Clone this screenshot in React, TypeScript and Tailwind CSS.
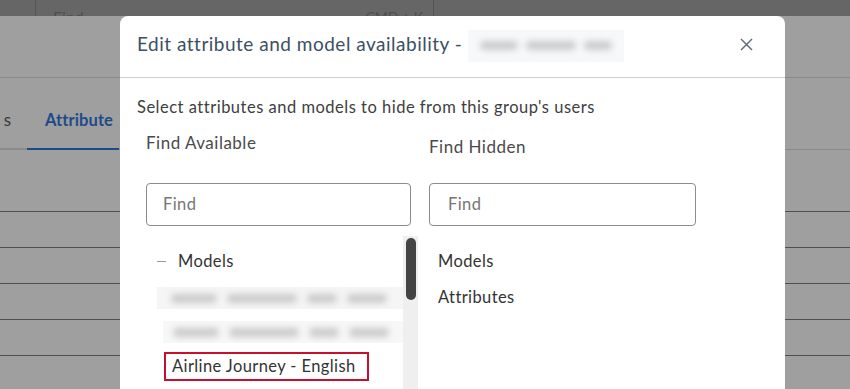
import React from "react";

function Blur({ w, className = "" }: { w: number; className?: string }) {
  return <span className={"inline-block h-[9px] rounded-full bg-[#cbcbcb] blur-[3px] " + className} style={{ width: w }} />;
}

export default function App() {
  return (
    <div className="relative w-[850px] h-[389px] overflow-hidden bg-[#9f9f9f] font-['Lato',sans-serif]">
      {/* background page */}
      <div className="flex h-[16px] bg-[#666666] overflow-hidden">
        <div className="w-[36px] h-full border-r border-[#555555]" />
        <div className="w-[398px] h-full border-r border-[#555555] flex justify-between pl-[17px] pr-[10px] text-[16px] leading-[20px] pt-[7px] text-[#4e4e4e]">
          <span>Find</span>
          <span className="text-[14px]">CMD + K</span>
        </div>
      </div>
      <div className="h-[62px] border-b border-[#8a8a8a]" />
      <div className="flex h-[72px] items-end">
        <div className="w-[27px] border-b-2 border-[#8a8a8a] pb-[16px] text-[17px] leading-[24px] text-[#3a3a3a] flex justify-end pr-[16px]">
          <span>s</span>
        </div>
        <div className="w-[92px] border-b-2 border-[#1d4b8a] pb-[16px] pl-[18px] text-[16.5px] tracking-[0.1px] leading-[24px] font-bold text-[#1d4b8a] whitespace-nowrap">
          Attribute
        </div>
        <div className="flex-1 border-b border-[#8a8a8a]" />
      </div>
      <div className="h-[62px] border-b border-[#4f4f4f]" />
      <div className="h-[36px] border-b border-[#4f4f4f]" />
      <div className="h-[36px] border-b border-[#4f4f4f]" />
      <div className="h-[36px] border-b border-[#4f4f4f]" />
      <div className="h-[36px] border-b border-[#4f4f4f]" />
      <div className="h-[36px] border-b border-[#4f4f4f]" />

      {/* modal */}
      <div className="absolute left-[120px] top-[16px] w-[665px] h-[400px] bg-white rounded-t-[8px]">
        <div className="h-[62px] border-b border-[#cfcfcf] flex items-center pl-[17px] pr-[32px] pb-[4px]">
          <span className="text-[19px] tracking-[0.5px] text-[#3d4f63] whitespace-nowrap">Edit attribute and model availability -</span>
          <div className="ml-[6px] w-[156px] h-[32px] bg-[#f7f8f9] flex items-center gap-[8px] px-[12px] mt-[2px]">
            <Blur w={40} />
            <Blur w={52} />
            <Blur w={30} />
          </div>
          <svg className="ml-auto" width="13" height="13" viewBox="0 0 13 13" fill="none" stroke="#5d6b7a" strokeWidth="1.4">
            <line x1="1" y1="1" x2="12" y2="12" />
            <line x1="12" y1="1" x2="1" y2="12" />
          </svg>
        </div>
        <div className="px-[17px] pt-[17px]">
          <div className="text-[16.5px] tracking-[0.5px] leading-[24px] text-[#404040] whitespace-nowrap">Select attributes and models to hide from this group's users</div>
          <div className="flex ml-[9px] gap-[11px]">
            <div className="w-[272px]">
              <div className="mt-[12px] text-[17px] tracking-[0.5px] leading-[24px] text-[#4a4a4a]">Find Available</div>
              <div className="mt-[28px] w-[265px] h-[43px] border border-[#8c8c8c] rounded-[4px] flex items-center pl-[16px] text-[16.5px] tracking-[0.4px] text-[#767676]">Find</div>
              <div className="mt-[10px] flex h-[170px]">
                <div className="w-[257px]">
                  <div className="flex items-center h-[34px] mt-[8px] pl-[11px]">
                    <span className="w-[9px] h-[1px] bg-[#9a9a9a]" />
                    <span className="ml-[12px] text-[16.5px] tracking-[0.4px] text-[#333333]">Models</span>
                  </div>
                  <div className="mt-[9px] ml-[11px] h-[22px] bg-[#f5f5f5] flex items-center gap-[10px] pl-[14px] overflow-hidden">
                    <Blur w={46} />
                    <Blur w={70} />
                    <Blur w={30} />
                    <Blur w={40} />
                  </div>
                  <div className="mt-[12px] ml-[17px] h-[22px] bg-[#f7f7f7] flex items-center gap-[10px] pl-[10px] overflow-hidden">
                    <Blur w={46} />
                    <Blur w={70} />
                    <Blur w={30} />
                    <Blur w={40} />
                  </div>
                  <div className="mt-[9px] ml-[18px] w-[205px] h-[29px] border-2 border-[#c8102e] flex items-center pl-[6px] text-[16.5px] tracking-[0.4px] text-[#333333] whitespace-nowrap">
                    Airline Journey - English
                  </div>
                </div>
                <div className="w-[15px] bg-[#efefef] pt-[2px]">
                  <div className="mx-auto w-[10px] h-[62px] rounded-full bg-[#444444]" />
                </div>
              </div>
            </div>
            <div className="w-[267px]">
              <div className="mt-[16px] text-[17px] tracking-[0.5px] leading-[24px] text-[#4a4a4a]">Find Hidden</div>
              <div className="mt-[24px] w-[267px] h-[43px] border border-[#8c8c8c] rounded-[4px] flex items-center pl-[18px] text-[16.5px] tracking-[0.4px] text-[#767676]">Find</div>
              <div className="mt-[23px] pl-[9px] text-[16.5px] tracking-[0.4px] leading-[24px] text-[#333333]">Models</div>
              <div className="mt-[12px] pl-[9px] text-[16.5px] tracking-[0.4px] leading-[24px] text-[#333333]">Attributes</div>
            </div>
          </div>
        </div>
      </div>
    </div>
  );
}
